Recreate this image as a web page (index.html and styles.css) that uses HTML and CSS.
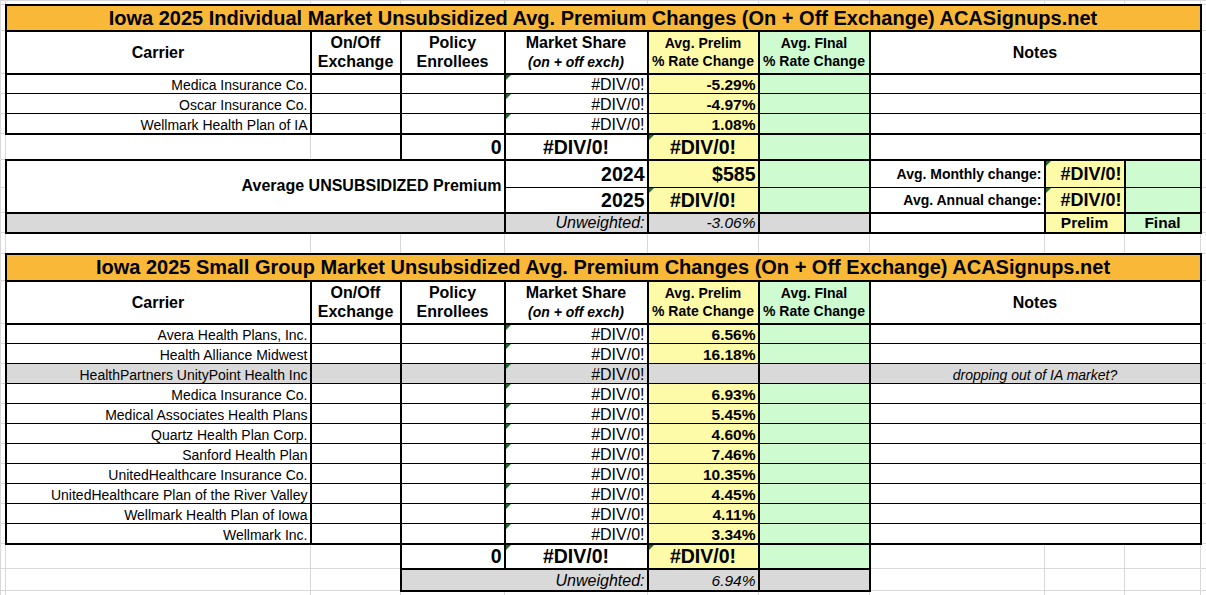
FILE: index.html
```html
<!DOCTYPE html>
<html>
<head>
<meta charset="utf-8">
<title>Iowa 2025 Premium Changes</title>
<link rel="stylesheet" href="styles.css">
</head>
<body>
<table class="sheet">
  <colgroup>
    <col class="c0"><col class="cA"><col class="cB"><col class="cC"><col class="cD"><col class="cE"><col class="cF"><col class="cG"><col class="cH"><col class="cI"><col class="c10">
  </colgroup>
  <tr class="h4"><td class="e"></td><td></td><td></td><td></td><td></td><td></td><td></td><td></td><td></td><td></td><td class="e"></td></tr>

  <!-- Table 1 -->
  <tr class="h26"><td class="e"></td><td class="k o title" colspan="9">Iowa 2025 Individual Market Unsubsidized Avg. Premium Changes (On + Off Exchange) ACASignups.net</td><td class="e"></td></tr>
  <tr class="h43">
    <td class="e"></td>
    <td class="k hd">Carrier</td>
    <td class="k hd">On/Off<br>Exchange</td>
    <td class="k hd">Policy<br>Enrollees</td>
    <td class="k hd">Market Share<br><span class="sub">(on + off exch)</span></td>
    <td class="k hd sm y">Avg. Prelim<br>% Rate Change</td>
    <td class="k hd sm g">Avg. FInal<br>% Rate Change</td>
    <td class="k hd" colspan="3">Notes</td>
    <td class="e"></td>
  </tr>
  <tr class="h20 d">
    <td class="e"></td><td class="k r">Medica Insurance Co.</td><td class="k"></td><td class="k"></td><td class="k r md tri">#DIV/0!</td><td class="k r pc y">-5.29%</td><td class="k g"></td><td class="k" colspan="3"></td><td class="e"></td>
  </tr>
  <tr class="h20 d">
    <td class="e"></td><td class="k r">Oscar Insurance Co.</td><td class="k"></td><td class="k"></td><td class="k r md tri">#DIV/0!</td><td class="k r pc y">-4.97%</td><td class="k g"></td><td class="k" colspan="3"></td><td class="e"></td>
  </tr>
  <tr class="h20 d last">
    <td class="e"></td><td class="k r">Wellmark Health Plan of IA</td><td class="k"></td><td class="k"></td><td class="k r md tri">#DIV/0!</td><td class="k r pc y">1.08%</td><td class="k g"></td><td class="k" colspan="3"></td><td class="e"></td>
  </tr>
  <tr class="h26">
    <td class="e"></td><td></td><td></td><td class="k r big mid">0</td><td class="k ctr big mid">#DIV/0!</td><td class="k ctr big mid y tri">#DIV/0!</td><td class="k g"></td><td class="k" colspan="3"></td><td class="e"></td>
  </tr>
  <tr class="h28 split">
    <td class="e"></td>
    <td class="k r avg" colspan="3" rowspan="2">Average UNSUBSIDIZED Premium</td>
    <td class="k r big mid">2024</td>
    <td class="k r big mid y">$585</td>
    <td class="k g"></td>
    <td class="k r lbl mid">Avg. Monthly change:</td>
    <td class="k r mbig mid y tri">#DIV/0!</td>
    <td class="k g"></td>
    <td class="e"></td>
  </tr>
  <tr class="h25 split2">
    <td class="e"></td>
    <td class="k r big mid">2025</td>
    <td class="k ctr big mid y tri">#DIV/0!</td>
    <td class="k g"></td>
    <td class="k r lbl mid">Avg. Annual change:</td>
    <td class="k r mbig mid y tri">#DIV/0!</td>
    <td class="k g"></td>
    <td class="e"></td>
  </tr>
  <tr class="h20">
    <td class="e"></td>
    <td class="k gr" colspan="3"></td>
    <td class="k r it gr">Unweighted:</td>
    <td class="k r it pcI gr">-3.06%</td>
    <td class="k gr"></td>
    <td class="k"></td>
    <td class="k ctr fin y">Prelim</td>
    <td class="k ctr fin g">Final</td>
    <td class="e"></td>
  </tr>
  <tr class="h21"><td class="e"></td><td></td><td></td><td></td><td></td><td></td><td></td><td></td><td></td><td></td><td class="e"></td></tr>

  <!-- Table 2 -->
  <tr class="h27"><td class="e"></td><td class="k o title" colspan="9">Iowa 2025 Small Group Market Unsubsidized Avg. Premium Changes (On + Off Exchange) ACASignups.net</td><td class="e"></td></tr>
  <tr class="h43">
    <td class="e"></td>
    <td class="k hd">Carrier</td>
    <td class="k hd">On/Off<br>Exchange</td>
    <td class="k hd">Policy<br>Enrollees</td>
    <td class="k hd">Market Share<br><span class="sub">(on + off exch)</span></td>
    <td class="k hd sm y">Avg. Prelim<br>% Rate Change</td>
    <td class="k hd sm g">Avg. FInal<br>% Rate Change</td>
    <td class="k hd" colspan="3">Notes</td>
    <td class="e"></td>
  </tr>
  <tr class="h20 d"><td class="e"></td><td class="k r">Avera Health Plans, Inc.</td><td class="k"></td><td class="k"></td><td class="k r md tri">#DIV/0!</td><td class="k r pc y">6.56%</td><td class="k g"></td><td class="k" colspan="3"></td><td class="e"></td></tr>
  <tr class="h20 d"><td class="e"></td><td class="k r">Health Alliance Midwest</td><td class="k"></td><td class="k"></td><td class="k r md tri">#DIV/0!</td><td class="k r pc y">16.18%</td><td class="k g"></td><td class="k" colspan="3"></td><td class="e"></td></tr>
  <tr class="h20 d grey"><td class="e"></td><td class="k r">HealthPartners UnityPoint Health Inc</td><td class="k"></td><td class="k"></td><td class="k r md tri">#DIV/0!</td><td class="k r pc"></td><td class="k"></td><td class="k ctr note" colspan="3">dropping out of IA market?</td><td class="e"></td></tr>
  <tr class="h20 d"><td class="e"></td><td class="k r">Medica Insurance Co.</td><td class="k"></td><td class="k"></td><td class="k r md tri">#DIV/0!</td><td class="k r pc y">6.93%</td><td class="k g"></td><td class="k" colspan="3"></td><td class="e"></td></tr>
  <tr class="h20 d"><td class="e"></td><td class="k r">Medical Associates Health Plans</td><td class="k"></td><td class="k"></td><td class="k r md tri">#DIV/0!</td><td class="k r pc y">5.45%</td><td class="k g"></td><td class="k" colspan="3"></td><td class="e"></td></tr>
  <tr class="h20 d"><td class="e"></td><td class="k r">Quartz Health Plan Corp.</td><td class="k"></td><td class="k"></td><td class="k r md tri">#DIV/0!</td><td class="k r pc y">4.60%</td><td class="k g"></td><td class="k" colspan="3"></td><td class="e"></td></tr>
  <tr class="h20 d"><td class="e"></td><td class="k r">Sanford Health Plan</td><td class="k"></td><td class="k"></td><td class="k r md tri">#DIV/0!</td><td class="k r pc y">7.46%</td><td class="k g"></td><td class="k" colspan="3"></td><td class="e"></td></tr>
  <tr class="h20 d"><td class="e"></td><td class="k r">UnitedHealthcare Insurance Co.</td><td class="k"></td><td class="k"></td><td class="k r md tri">#DIV/0!</td><td class="k r pc y">10.35%</td><td class="k g"></td><td class="k" colspan="3"></td><td class="e"></td></tr>
  <tr class="h20 d"><td class="e"></td><td class="k r">UnitedHealthcare Plan of the River Valley</td><td class="k"></td><td class="k"></td><td class="k r md tri">#DIV/0!</td><td class="k r pc y">4.45%</td><td class="k g"></td><td class="k" colspan="3"></td><td class="e"></td></tr>
  <tr class="h20 d"><td class="e"></td><td class="k r">Wellmark Health Plan of Iowa</td><td class="k"></td><td class="k"></td><td class="k r md tri">#DIV/0!</td><td class="k r pc y">4.11%</td><td class="k g"></td><td class="k" colspan="3"></td><td class="e"></td></tr>
  <tr class="h20 d last"><td class="e"></td><td class="k r">Wellmark Inc.</td><td class="k"></td><td class="k"></td><td class="k r md tri">#DIV/0!</td><td class="k r pc y">3.34%</td><td class="k g"></td><td class="k" colspan="3"></td><td class="e"></td></tr>
  <tr class="h25">
    <td class="e"></td><td></td><td></td><td class="k r big mid">0</td><td class="k ctr big mid tri">#DIV/0!</td><td class="k ctr big mid y tri">#DIV/0!</td><td class="k g"></td><td></td><td></td><td></td><td class="e"></td>
  </tr>
  <tr class="h22">
    <td class="e"></td><td></td><td></td>
    <td class="k r it gr" colspan="2">Unweighted:</td>
    <td class="k r it pcI gr">6.94%</td>
    <td class="k gr"></td>
    <td></td><td></td><td></td><td class="e"></td>
  </tr>
  <tr class="h10"><td class="e"></td><td></td><td></td><td></td><td></td><td></td><td></td><td></td><td></td><td></td><td class="e"></td></tr>
</table>
</body>
</html>
```

FILE: styles.css
```css
html, body {
  margin: 0;
  padding: 0;
  background: #ffffff;
}
body {
  font-family: "Liberation Sans", Arial, sans-serif;
  color: #000;
}
.sheet {
  border-collapse: collapse;
  table-layout: fixed;
  width: 1206px;
}
.c0 { width: 5px; }
.cA { width: 305px; }
.cB { width: 90px; }
.cC { width: 104px; }
.cD { width: 143px; }
.cE { width: 111px; }
.cF { width: 111px; }
.cG { width: 175px; }
.cH { width: 80px; }
.cI { width: 76px; }
.c10 { width: 6px; }

.h4 { height: 4px; }
.h10 { height: 10px; }
.h20 { height: 20px; }
.h21 { height: 21px; }
.h22 { height: 22px; }
.h25 { height: 25px; }
.h26 { height: 26px; }
.h27 { height: 27px; }
.h28 { height: 28px; }
.h43 { height: 43px; }

.sheet td {
  border: 1px solid #d9d9d9;
  padding: 0 2px;
  font-size: 14px;
  line-height: 16px;
  white-space: nowrap;
  overflow: hidden;
  vertical-align: bottom;
  position: relative;
}
.sheet td.e { padding: 0; }
.sheet td.k { border: 2px solid #000; }
.sheet tr.d td.k { border-top-width: 1px; border-bottom-width: 1px; }
.sheet tr.d.last td.k { border-bottom-width: 2px; }
.sheet tr.split td.k { border-bottom-width: 1px; }
.sheet tr.split td.k.avg { border-bottom-width: 2px; }
.sheet tr.split2 td.k { border-top-width: 1px; }

.o { background: #f9b838; }
.y { background: #fdfba8; }
.g { background: #cffbd0; }
.gr { background: #d9d9d9; }
.grey td.k { background: #d9d9d9; }

.sheet td.title {
  font-size: 20px;
  font-weight: bold;
  text-align: center;
  vertical-align: middle;
  line-height: 22px;
}
.sheet td.hd {
  font-size: 16px;
  font-weight: bold;
  text-align: center;
  vertical-align: middle;
  line-height: 19px;
}
.sheet td.hd.sm {
  font-size: 14px;
  line-height: 18px;
}
.sub {
  font-size: 14px;
  font-style: italic;
}
.r { text-align: right; }
.ctr { text-align: center; }
.sheet td.md { font-size: 16px; }
.sheet td.pc { font-size: 15.5px; font-weight: bold; }
.sheet td.big { font-size: 19.5px; font-weight: bold; line-height: 22px; }
.sheet td.mid { vertical-align: middle; }
.sheet td.avg { font-size: 16px; font-weight: bold; vertical-align: middle; }
.sheet td.lbl { font-size: 14px; font-weight: bold; }
.sheet td.mbig { font-size: 18px; font-weight: bold; line-height: 20px; }
.sheet td.it { font-size: 16px; font-style: italic; line-height: 18px; }
.sheet td.pcI { font-size: 15.5px; }
.sheet td.fin { font-size: 15.5px; font-weight: bold; line-height: 18px; }
.sheet td.note { font-size: 14px; font-style: italic; }

.tri::before {
  content: "";
  position: absolute;
  left: 0;
  top: 0;
  width: 0;
  height: 0;
  border-style: solid;
  border-width: 5px 5px 0 0;
  border-color: #226b2a transparent transparent transparent;
}
```
